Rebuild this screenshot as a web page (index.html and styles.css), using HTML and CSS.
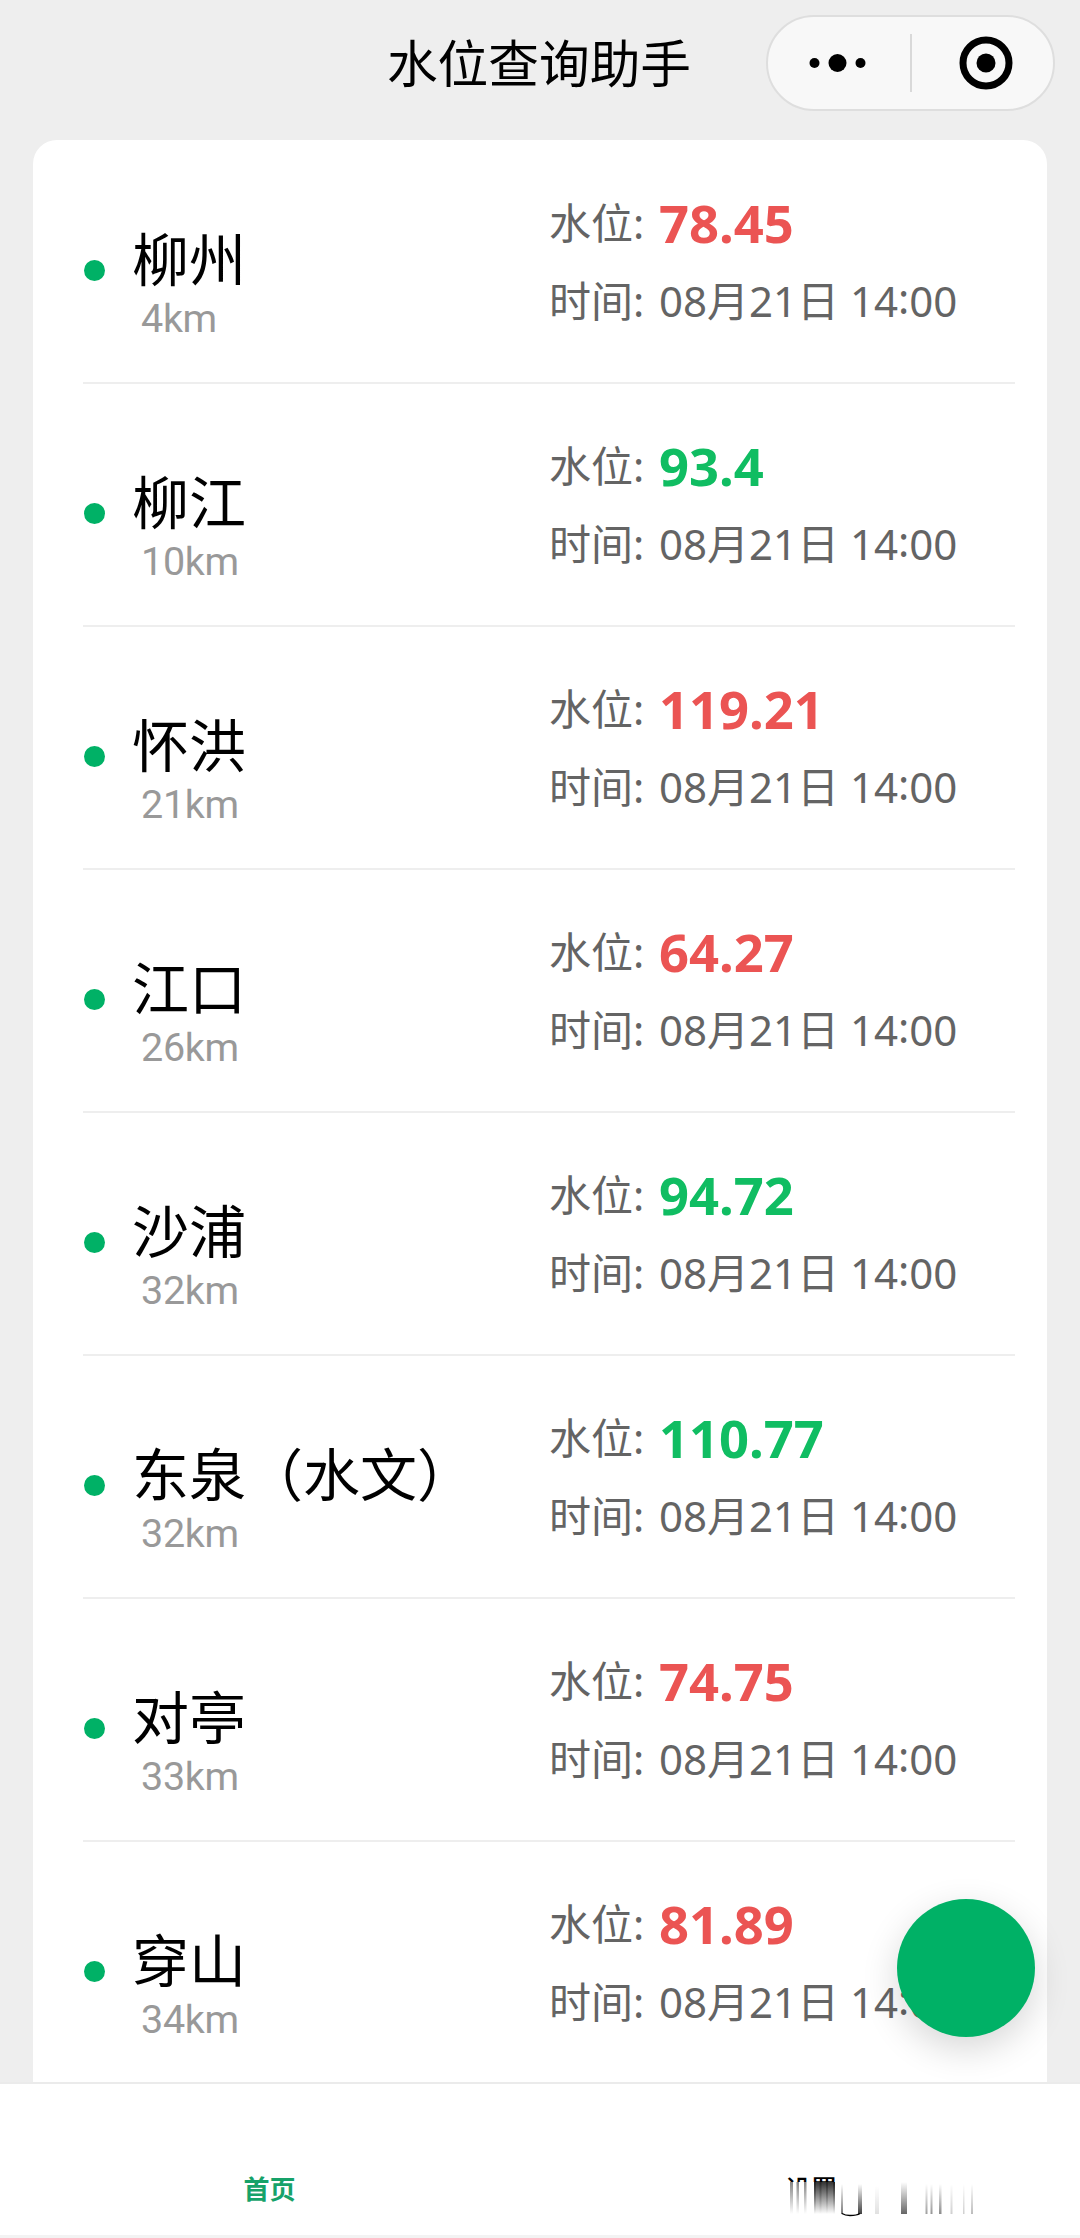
FILE: index.html
```html
<!DOCTYPE html>
<html lang="zh-CN">
	<head>
		<meta charset="UTF-8" />
		<meta name="viewport" content="width=device-width, initial-scale=1.0" />
		<title>水位查询助手</title>
		<link rel="stylesheet" href="styles.css">
	</head>
	<body>
		<header class="navbar">
			<h1>水位查询助手</h1>
			<div class="capsule">
				<svg class="capsule-more" width="50" height="24" viewBox="0 0 50 24">
					<circle cx="5.500" cy="12" r="5" />
					<circle cx="28.500" cy="12" r="9" />
					<circle cx="51.500" cy="12" r="5" />
				</svg>
				<span class="capsule-line"></span>
				<svg class="capsule-close" width="54" height="54" viewBox="0 0 54 54">
					<circle cx="27" cy="27" r="23" fill="none" stroke="#000" stroke-width="7" />
					<circle cx="27" cy="27" r="9.500" />
				</svg>
			</div>
		</header>

		<main class="content">
			<ul class="station-list">
				<li class="station">
					<span class="dot"></span>
					<div class="station-info">
						<div class="station-name">柳州</div>
						<div class="station-distance">4km</div>
					</div>
					<div class="station-data">
						<div class="level">水位: <b class="high">78.45</b></div>
						<div class="time">时间: <span>08月21日 14<i>:</i>00</span></div>
					</div>
				</li>
				<li class="station">
					<span class="dot"></span>
					<div class="station-info">
						<div class="station-name">柳江</div>
						<div class="station-distance">10km</div>
					</div>
					<div class="station-data">
						<div class="level">水位: <b class="normal">93.4</b></div>
						<div class="time">时间: <span>08月21日 14<i>:</i>00</span></div>
					</div>
				</li>
				<li class="station">
					<span class="dot"></span>
					<div class="station-info">
						<div class="station-name">怀洪</div>
						<div class="station-distance">21km</div>
					</div>
					<div class="station-data">
						<div class="level">水位: <b class="high">119.21</b></div>
						<div class="time">时间: <span>08月21日 14<i>:</i>00</span></div>
					</div>
				</li>
				<li class="station">
					<span class="dot"></span>
					<div class="station-info">
						<div class="station-name">江口</div>
						<div class="station-distance">26km</div>
					</div>
					<div class="station-data">
						<div class="level">水位: <b class="high">64.27</b></div>
						<div class="time">时间: <span>08月21日 14<i>:</i>00</span></div>
					</div>
				</li>
				<li class="station">
					<span class="dot"></span>
					<div class="station-info">
						<div class="station-name">沙浦</div>
						<div class="station-distance">32km</div>
					</div>
					<div class="station-data">
						<div class="level">水位: <b class="normal">94.72</b></div>
						<div class="time">时间: <span>08月21日 14<i>:</i>00</span></div>
					</div>
				</li>
				<li class="station">
					<span class="dot"></span>
					<div class="station-info">
						<div class="station-name">东泉（水文）</div>
						<div class="station-distance">32km</div>
					</div>
					<div class="station-data">
						<div class="level">水位: <b class="normal">110.77</b></div>
						<div class="time">时间: <span>08月21日 14<i>:</i>00</span></div>
					</div>
				</li>
				<li class="station">
					<span class="dot"></span>
					<div class="station-info">
						<div class="station-name">对亭</div>
						<div class="station-distance">33km</div>
					</div>
					<div class="station-data">
						<div class="level">水位: <b class="high">74.75</b></div>
						<div class="time">时间: <span>08月21日 14<i>:</i>00</span></div>
					</div>
				</li>
				<li class="station">
					<span class="dot"></span>
					<div class="station-info">
						<div class="station-name">穿山</div>
						<div class="station-distance">34km</div>
					</div>
					<div class="station-data">
						<div class="level">水位: <b class="high">81.89</b></div>
						<div class="time">时间: <span>08月21日 14<i>:</i>00</span></div>
					</div>
				</li>
			</ul>
		</main>

		<div class="fab"></div>

		<nav class="tabbar">
			<div class="tab active">首页</div>
			<div class="tab tab-settings">
				<div class="settings-label">设置</div>
				<svg class="settings-trail" width="200" height="40" viewBox="0 0 200 40">
					<defs>
						<linearGradient id="fadeOut" x1="0" y1="0" x2="0" y2="1">
							<stop offset="0" stop-color="#000" stop-opacity=".8" />
							<stop offset="1" stop-color="#000" stop-opacity="0" />
						</linearGradient>
						<linearGradient id="fadeIn" x1="0" y1="0" x2="0" y2="1">
							<stop offset="0" stop-color="#000" stop-opacity="0" />
							<stop offset="1" stop-color="#000" stop-opacity=".75" />
						</linearGradient>
					</defs>
					<g fill="url(#fadeOut)">
						<rect x="9" y="5" width="3" height="32" opacity=".6" />
						<rect x="15.500" y="5" width="2.500" height="32" opacity=".6" />
						<rect x="23" y="5" width="2.500" height="32" opacity=".6" />
						<rect x="33" y="5" width="21" height="32" />
						<rect x="33" y="5" width="2" height="32" opacity=".5" />
						<rect x="38.500" y="5" width="2" height="32" opacity=".4" />
						<rect x="45" y="5" width="2" height="32" opacity=".4" />
						<rect x="52" y="5" width="2" height="32" opacity=".5" />
					</g>
					<g fill="url(#fadeIn)">
						<rect x="60" y="7" width="2" height="30" opacity=".7" />
						<rect x="77" y="7" width="4" height="30" />
						<rect x="94" y="9" width="4" height="28" opacity=".16" />
						<rect x="120" y="5" width="6" height="32" opacity=".8" />
						<rect x="144.500" y="7" width="2" height="30" opacity=".5" />
						<rect x="149.500" y="7" width="2" height="30" opacity=".55" />
						<rect x="158" y="7" width="2.500" height="30" opacity=".6" />
						<rect x="169.500" y="7" width="2" height="30" opacity=".25" />
						<rect x="182" y="7" width="1.500" height="30" opacity=".25" />
						<rect x="190" y="7" width="2" height="30" opacity=".35" />
					</g>
					<path d="M61 36.500Q64 38.500 69 38.500Q76 38.500 79 36.500" fill="none" stroke="#000" stroke-width="1.500" />
				</svg>
			</div>
		</nav>
	</body>
</html>
```
FILE: styles.css
```css
:root {
	--green: #00b166;
	--level-red: #eb5453;
	--level-green: #10bd62;
	--bg-color: #eeeeee;
	--text-grey: #646464;
	--text-light: #999999;
	--border-color: #eeeeee;
}

* {
	margin: 0;
	padding: 0;
	box-sizing: border-box;
}

body {
	height: 2238px;
	display: flex;
	flex-direction: column;
	overflow: hidden;
	font-family: 'Noto Sans', 'Noto Sans CJK SC', sans-serif;
	background-color: var(--bg-color);
	color: #000;
}

.navbar {
	position: relative;
	flex: none;
	height: 140px;
	padding: 0 2px 19px 0;
	display: flex;
	align-items: center;
	justify-content: center;
}

h1 {
	font-family: 'Noto Sans CJK SC', sans-serif;
	font-size: 50.7px;
	font-weight: 400;
	line-height: 64px;
}

/* mini program menu button */
.capsule {
	position: absolute;
	top: 15px;
	right: 25px;
	width: 289px;
	height: 96px;
	padding: 0 40px 0 41px;
	display: flex;
	align-items: center;
	justify-content: space-between;
	background-color: #f8f8f8;
	border: 2px solid #dedede;
	border-radius: 48px;
}

.capsule-more {
	overflow: visible;
}

.capsule-line {
	width: 2px;
	height: 58px;
	margin-left: 4px;
	background-color: #d9d9d9;
}

.content {
	flex: 1;
	min-height: 0;
	padding: 0 33px;
	overflow: hidden;
}

.station-list {
	list-style: none;
	padding: 0 32px 0 50px;
	background-color: #fff;
	border-radius: 24px 24px 0 0;
}

.station {
	height: 243px;
	display: flex;
	align-items: flex-start;
	border-bottom: 2px solid var(--border-color);
}

.station:first-child {
	height: 244px;
	padding-top: 1px;
}

.dot {
	width: 21px;
	height: 21px;
	margin: 119px 27px 0 1px;
	border-radius: 50%;
	background-color: var(--green);
}

.station-info {
	width: 417px;
	padding-top: 75px;
}

.station-name {
	font-family: 'Noto Sans CJK SC', sans-serif;
	font-size: 57px;
	line-height: 80px;
	white-space: nowrap;
}

.station-distance {
	padding-left: 9px;
	font-family: Roboto, sans-serif;
	font-size: 39.5px;
	line-height: 46px;
	letter-spacing: -0.3px;
	color: var(--text-light);
}

.station-data {
	padding-top: 43px;
	color: var(--text-grey);
	font-size: 42px;
	white-space: nowrap;
}

.level,
.time {
	height: 78px;
	line-height: 78px;
}

.level b,
.time span {
	position: absolute;
	left: 659px;
}

.level b {
	font-size: 52.5px;
	font-weight: 700;
}

.time i {
	position: relative;
	top: -3px;
	font-style: normal;
}

.high {
	color: var(--level-red);
}

.normal {
	color: var(--level-green);
}

.fab {
	position: absolute;
	left: 897px;
	top: 1899px;
	width: 138px;
	height: 138px;
	border-radius: 50%;
	background-color: var(--green);
	box-shadow: 0 12px 36px rgba(0, 0, 0, 0.16);
}

.tabbar {
	position: relative;
	flex: none;
	height: 156px;
	display: flex;
	background-color: #fff;
	border-top: 2px solid #ebebeb;
	border-bottom: 3px solid #f3f3f3;
}

.tab {
	flex: 1;
	padding-top: 85px;
	font-family: 'Noto Sans CJK SC', sans-serif;
	font-size: 26px;
	line-height: 38px;
	text-align: center;
}

.tab.active {
	padding-right: 2px;
	color: #16a269;
	font-weight: 700;
}

.tab-settings {
	position: relative;
	text-align: left;
}

/* only the top edge of the label is painted, the rest fades into the trail */
.settings-label {
	position: absolute;
	left: 244px;
	top: 85px;
	height: 13px;
	overflow: hidden;
	font-weight: 500;
}

.settings-trail {
	position: absolute;
	left: 240px;
	top: 93px;
}
```
